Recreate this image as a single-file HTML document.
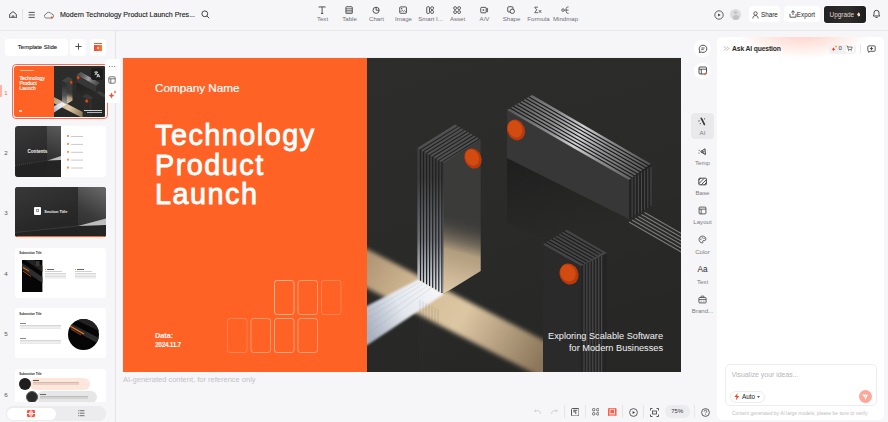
<!DOCTYPE html>
<html><head><meta charset="utf-8">
<style>
*{box-sizing:border-box;margin:0;padding:0}
html,body{width:888px;height:422px;overflow:hidden;background:#f6f6f8;font-family:"Liberation Sans",sans-serif;color:#222}
.a{position:absolute}
.tb{left:0;top:0;width:888px;height:31px;border-bottom:1px solid #e6e6e9;background:#f6f6f8}
.lp{left:0;top:31px;width:116px;height:391px;border-right:1px solid #e6e6e9;background:#f6f6f8}
.card{background:#fff;border-radius:4px}
.tool{width:27px;text-align:center;top:6px}
.tool svg{display:block;margin:0 auto}
.tool svg{width:8.2px;height:8.2px}
.tool span{display:block;font-size:6.1px;line-height:7px;color:#707075;margin-top:1px;white-space:nowrap}
.num{font-size:6.2px;color:#555;width:12px;text-align:center;left:0}
.thumb{left:14.5px;width:91px;height:51px;border-radius:3px;overflow:hidden;background:#fff}
.side span{display:block;font-size:6.1px;line-height:7px;color:#7a7a7e;text-align:center;margin-top:3.6px;white-space:nowrap}
.side svg{width:9px;height:9px}
</style></head><body>

<!-- ============ TOP BAR ============ -->
<div class="a tb"></div>
<!-- home -->
<svg class="a" style="left:8.5px;top:10.8px" width="8" height="7.5" viewBox="0 0 8 7.5"><path d="M0.7 3.3 L4 0.6 L7.3 3.3 V6.9 H0.7 Z" fill="none" stroke="#333" stroke-width="0.9" stroke-linejoin="round"/><path d="M3.1 6.9 V4.9 H4.9 V6.9" fill="none" stroke="#333" stroke-width="0.8"/></svg>
<div class="a" style="left:22px;top:9px;width:1px;height:11px;background:#e2e2e5"></div>
<!-- menu -->
<svg class="a" style="left:28px;top:11px" width="8" height="8" viewBox="0 0 8 8"><path d="M0.6 1.4H6.8M0.6 3.9H6.8M0.6 6.4H6.8" stroke="#444" stroke-width="0.9"/></svg>
<!-- cloud -->
<svg class="a" style="left:44px;top:11px" width="10" height="8" viewBox="0 0 10 8"><path d="M2.5 7 H7.5 A2 2 0 0 0 7.5 3 A3 3 0 0 0 2 3.2 A1.9 1.9 0 0 0 2.5 7Z" fill="none" stroke="#666" stroke-width="0.8"/><circle cx="7.8" cy="6.5" r="1.1" fill="#e85a2a"/></svg>
<div class="a" style="left:60px;top:10.5px;font-size:7.05px;color:#1a1a1a;white-space:nowrap;-webkit-text-stroke:0.12px #1a1a1a">Modern Technology Product Launch Pres...</div>
<!-- search -->
<svg class="a" style="left:201px;top:10px" width="9" height="9" viewBox="0 0 9 9"><circle cx="3.8" cy="3.8" r="2.9" fill="none" stroke="#333" stroke-width="0.9"/><path d="M6 6 L8.2 8.2" stroke="#333" stroke-width="0.9"/></svg>

<!-- toolbar -->
<div class="a tool" style="left:309px"><svg width="9" height="9" viewBox="0 0 9 9"><path d="M1 1.5 V1 H8 V1.5 M4.5 1 V8.2 M3.2 8.2 H5.8" fill="none" stroke="#333" stroke-width="0.9"/></svg><span>Text</span></div>
<div class="a tool" style="left:336px"><svg width="9" height="9" viewBox="0 0 9 9"><rect x="1" y="0.8" width="7" height="7.6" rx="0.8" fill="none" stroke="#333" stroke-width="0.9"/><path d="M1 3H8M1 4.8H8M1 6.6H8" stroke="#333" stroke-width="0.7"/></svg><span>Table</span></div>
<div class="a tool" style="left:363px"><svg width="9" height="9" viewBox="0 0 9 9"><circle cx="4.5" cy="4.7" r="3.4" fill="none" stroke="#333" stroke-width="0.9"/><path d="M4.5 1.3 V4.7 H7.9" fill="none" stroke="#333" stroke-width="0.9"/></svg><span>Chart</span></div>
<div class="a tool" style="left:390px"><svg width="9" height="9" viewBox="0 0 9 9"><rect x="0.8" y="1" width="7.4" height="7" rx="0.8" fill="none" stroke="#333" stroke-width="0.9"/><path d="M1.5 6.8 L3.5 4.6 L5 6 L6 5 L7.8 6.8" fill="none" stroke="#333" stroke-width="0.7"/><circle cx="3" cy="3" r="0.7" fill="#333"/></svg><span>Image</span></div>
<div class="a tool" style="left:417px"><svg width="9" height="9" viewBox="0 0 9 9"><rect x="0.8" y="0.8" width="3" height="7.4" rx="1" fill="none" stroke="#333" stroke-width="0.9"/><rect x="5.2" y="0.8" width="3" height="3.2" rx="1.2" fill="none" stroke="#333" stroke-width="0.9"/><rect x="5.2" y="5" width="3" height="3.2" rx="1.2" fill="none" stroke="#333" stroke-width="0.9"/></svg><span>Smart I...</span></div>
<div class="a tool" style="left:444px"><svg width="9" height="9" viewBox="0 0 9 9"><rect x="0.8" y="0.8" width="3" height="3" rx="1.2" fill="none" stroke="#333" stroke-width="0.9"/><rect x="5.2" y="0.8" width="3" height="3" rx="1.2" fill="none" stroke="#333" stroke-width="0.9"/><rect x="0.8" y="5.2" width="3" height="3" rx="1.2" fill="none" stroke="#333" stroke-width="0.9"/><rect x="5.2" y="5.2" width="3" height="3" rx="1.2" fill="none" stroke="#333" stroke-width="0.9"/></svg><span>Asset</span></div>
<div class="a tool" style="left:471px"><svg width="9" height="9" viewBox="0 0 9 9"><rect x="0.8" y="1.5" width="6" height="6" rx="1" fill="none" stroke="#333" stroke-width="0.9"/><path d="M6.8 3.5 L8.3 2.6 V6.4 L6.8 5.5" fill="none" stroke="#333" stroke-width="0.8"/><path d="M3 3.3 L5 4.5 L3 5.7Z" fill="#333"/></svg><span>A/V</span></div>
<div class="a tool" style="left:498px"><svg width="9" height="9" viewBox="0 0 9 9"><rect x="0.8" y="0.8" width="5.8" height="5.8" rx="1" fill="none" stroke="#333" stroke-width="0.9"/><circle cx="5.8" cy="5.8" r="2.4" fill="#f6f6f8" stroke="#333" stroke-width="0.9"/></svg><span>Shape</span></div>
<div class="a tool" style="left:525px"><svg width="9" height="9" viewBox="0 0 9 9"><path d="M4.3 1.3 H0.8 L3 4.3 L0.8 7.3 H4.3" fill="none" stroke="#333" stroke-width="0.8"/><path d="M5.3 4.5 L8 7.5 M8 4.5 L5.3 7.5" stroke="#333" stroke-width="0.8"/></svg><span>Formula</span></div>
<div class="a tool" style="left:552px"><svg width="9" height="9" viewBox="0 0 9 9"><circle cx="2.2" cy="4.5" r="1.4" fill="none" stroke="#333" stroke-width="0.8"/><path d="M3.6 4.5 H5 M8.3 1 C6 1 5.6 2 5.6 3.4 V5.6 C5.6 7 6 8 8.3 8 M5.6 4.5 H8.3" fill="none" stroke="#333" stroke-width="0.8"/></svg><span>Mindmap</span></div>

<!-- right top -->
<svg class="a" style="left:714px;top:9.5px" width="10" height="10" viewBox="0 0 10 10"><circle cx="5" cy="5" r="4.2" fill="none" stroke="#3a3a3a" stroke-width="0.8"/><path d="M4.1 3.4 L6.6 5 L4.1 6.6Z" fill="#3a3a3a"/></svg>
<div class="a" style="left:730.2px;top:8.8px;width:11px;height:11px;border-radius:50%;background:#dcdcde;overflow:hidden"><div class="a" style="left:4px;top:2.2px;width:3px;height:3px;border-radius:50%;background:#c2c2c5"></div><div class="a" style="left:2.5px;top:6.3px;width:6px;height:5px;border-radius:50%;background:#c2c2c5"></div></div>
<div class="a card" style="left:749px;top:6px;width:31px;height:16px"><svg class="a" style="left:2.5px;top:4.5px" width="8" height="8" viewBox="0 0 8 8"><circle cx="3.5" cy="2.5" r="1.7" fill="none" stroke="#333" stroke-width="0.8"/><path d="M0.8 7.5 C1 5.5 2 4.6 3.5 4.6 C5 4.6 6 5.5 6.2 7.5" fill="none" stroke="#333" stroke-width="0.8"/></svg><span class="a" style="left:12px;top:5px;font-size:6.3px;color:#222">Share</span></div>
<div class="a card" style="left:784px;top:6px;width:36px;height:16px"><svg class="a" style="left:4.5px;top:4.3px" width="8" height="8" viewBox="0 0 8 8"><path d="M4 0.8 V5 M2.3 2.4 L4 0.8 L5.7 2.4 M1 3.8 V7.2 H7 V3.8" fill="none" stroke="#333" stroke-width="0.8"/></svg><span class="a" style="left:12.8px;top:5px;font-size:6.3px;color:#222">Export</span></div>
<div class="a" style="left:824px;top:6px;width:42px;height:16.5px;border-radius:3px;background:linear-gradient(90deg,#222,#2e2e2e 55%,#1e1e1e);box-shadow:0 0 0 1px #fff"><span class="a" style="left:5.6px;top:4.8px;font-size:6.4px;color:#e0d3c6">Upgrade</span><svg class="a" style="left:32.8px;top:6.2px" width="3.5" height="5" viewBox="0 0 4 5"><path d="M2 0 L4 2.5 L2 5 L0 2.5Z" fill="#f3e0c8"/></svg></div>
<svg class="a" style="left:872px;top:9px" width="9" height="10" viewBox="0 0 9 10"><path d="M1.2 7 C2 6 2 5 2 3.8 A2.5 2.5 0 0 1 7 3.8 C7 5 7 6 7.8 7Z" fill="none" stroke="#333" stroke-width="0.9" stroke-linejoin="round"/><path d="M3.5 8.5 H5.5" stroke="#333" stroke-width="0.9"/></svg>

<!-- ============ LEFT PANEL ============ -->
<div class="a lp"></div>
<div class="a card" style="left:5px;top:39px;width:63px;height:16.5px"><span class="a" style="left:12.8px;top:4.8px;font-size:6.0px;color:#1a1a1a;white-space:nowrap;-webkit-text-stroke:0.1px #1a1a1a">Template Slide</span></div>
<div class="a card" style="left:70px;top:39px;width:16px;height:16.5px"><svg class="a" style="left:4.5px;top:4.2px" width="7" height="7" viewBox="0 0 7 7"><path d="M3.5 0.4V6.6M0.4 3.5H6.6" stroke="#333" stroke-width="0.85"/></svg></div>
<div class="a card" style="left:90px;top:39px;width:16px;height:16.5px"><div class="a" style="left:4px;top:4px;width:8px;height:1px;background:#f0552b"></div><div class="a" style="left:4px;top:6px;width:8px;height:6px;background:linear-gradient(90deg,#f0483a,#ff7a2a)"></div><div class="a" style="left:7px;top:8px;width:2px;height:2px;background:#fff;border-radius:50%"></div></div>

<!-- slides list placeholder -->
<!-- thumb 1 -->
<div class="a" style="left:0;top:85px;width:2px;height:12px;background:#ffb3a3;border-radius:0 1px 1px 0"></div>
<div class="a num" style="top:88.5px;color:#f4683f">1</div>
<div class="a" style="left:12px;top:64px;width:95.5px;height:55px;border:1px solid #ff6a55;border-radius:4px;background:#fff"></div>
<div class="a thumb" style="left:14px;top:66px;width:91.5px;height:51px;border-radius:2.5px">
  <div class="a" style="left:0;top:0;width:40px;height:51px;background:#ff6224"></div>
  <svg class="a" style="left:40px;top:0" width="51" height="51" viewBox="0 0 314 314"><use href="#photo" width="314" height="314"/></svg>
  <div class="a" style="left:5.5px;top:4.4px;width:14px;height:0.8px;background:#ffb592"></div>
  <div class="a" style="left:5.5px;top:10.3px;font-size:5px;line-height:4.9px;color:#fff;white-space:nowrap;-webkit-text-stroke:0.15px #fff">Technology<br>Product<br>Launch</div>
  <div class="a" style="left:5px;top:44px;width:3px;height:2px;background:#ffd0b8"></div>
  <div class="a" style="left:69.5px;top:43.6px;width:18px;height:0.8px;background:#cfcfcf"></div>
  <div class="a" style="left:73px;top:45.5px;width:14.5px;height:0.8px;background:#b5b5b5"></div>
  <div class="a" style="left:77px;top:2px;width:12px;height:12px;border-radius:2.5px;background:#1c1c1c"></div>
  <svg class="a" style="left:79px;top:4px" width="8" height="8" viewBox="0 0 9 9" fill="none" stroke="#f0f0f0" stroke-width="0.9"><path d="M1.5 2.5 H5.5 M3.5 1.2 V2.5 M1.8 5.5 C3.5 4.8 4.6 3.6 5 2.5 M2.5 3.3 C3.2 4.5 4.5 5.3 5.5 5.6 M4.3 8.3 L6 4.5 L7.7 8.3 M4.9 7 H7.1"/></svg>
</div>
<!-- thumb toolbar -->
<div class="a card" style="left:105px;top:59px;width:15px;height:44px;border-radius:4px 0 0 4px"></div>
<div class="a" style="left:108.5px;top:66px;width:1.4px;height:1.4px;background:#777;box-shadow:2.6px 0 0 #777,5.2px 0 0 #777"></div>
<svg class="a" style="left:108px;top:76px" width="8" height="8" viewBox="0 0 8 8"><rect x="0.8" y="0.8" width="6.4" height="6.4" rx="1" fill="none" stroke="#555" stroke-width="0.8"/><path d="M0.8 2.8 H7.2 M2.8 2.8 V7.2" stroke="#555" stroke-width="0.8"/></svg>
<svg class="a" style="left:107.5px;top:90px" width="9" height="9" viewBox="0 0 9 9"><path d="M3.5 2.5 Q3.9 5.1 6.5 5.5 Q3.9 5.9 3.5 8.5 Q3.1 5.9 0.5 5.5 Q3.1 5.1 3.5 2.5Z" fill="#ff4b2b"/><path d="M7 0.5 Q7.2 1.8 8.5 2 Q7.2 2.2 7 3.5 Q6.8 2.2 5.5 2 Q6.8 1.8 7 0.5Z" fill="#ff4b2b"/></svg>

<!-- thumb 2 -->
<div class="a num" style="top:149px">2</div>
<div class="a thumb" style="top:126.4px;height:50.6px;border-radius:3px">
  <div class="a" style="left:0;top:0;width:46px;height:51px;background:linear-gradient(160deg,#3a3a3a,#262626 70%)"></div>
  <div class="a" style="left:32.5px;top:0;width:13.5px;height:51px;background:linear-gradient(200deg,#5a5a5a,#333 60%,#2a2a2a)"></div>
  <svg class="a" style="left:0;top:0" width="46" height="51" viewBox="0 0 46 51"><path d="M0 40 L32.5 34.5 L46 31.5 V51 H0Z" fill="#222" opacity="0.8"/><path d="M32.5 34.5 L46 30 V34 Z" fill="#bdbdbd"/><path d="M0 39.5 L32.5 34.5" stroke="#777" stroke-width="0.4" stroke-dasharray="1 1"/></svg>
  <div class="a" style="left:13px;top:22.3px;font-size:4.6px;font-weight:bold;color:#f4f4f4;white-space:nowrap">Contents</div>
  <div class="a" style="left:52.8px;top:9px;width:1.5px;height:1.5px;background:#ff9466;box-shadow:0 7.9px 0 #ff9466,0 15.8px 0 #ff9466,0 23.6px 0 #ff9466,0 31.5px 0 #ff9466"></div>
  <div class="a" style="left:56px;top:9.2px;width:12.5px;height:1px;background:#cacaca;box-shadow:0 7.9px 0 #cacaca,0 15.8px 0 #cacaca,0 23.6px 0 #cacaca,0 31.5px 0 #cacaca"></div>
</div>

<!-- thumb 3 -->
<div class="a num" style="top:209.3px">3</div>
<div class="a thumb" style="top:186.8px;height:50.4px;border-radius:3px;background:#2a2a2a">
  <div class="a" style="left:0;top:0;width:63px;height:51px;background:linear-gradient(160deg,#383838,#262626 70%)"></div>
  <div class="a" style="left:63px;top:0;width:28px;height:51px;background:linear-gradient(210deg,#6a6a6a,#3a3a3a 55%,#2b2b2b)"></div>
  <svg class="a" style="left:0;top:0" width="91" height="51" viewBox="0 0 91 51"><path d="M0 45.5 L63 39 L91 38 V51 H0Z" fill="#232323" opacity="0.9"/><path d="M63 39 L91 31.5 V38 Z" fill="#bdbdbd"/><path d="M0 45.5 L63 39" stroke="#5a5a5a" stroke-width="0.4"/></svg>
  <div class="a" style="left:19px;top:20.4px;width:7.8px;height:7.6px;background:#fff;border-radius:1px"></div>
  <div class="a" style="left:21.6px;top:22.6px;width:2.5px;height:3px;border:0.5px solid #999"></div>
  <div class="a" style="left:29.8px;top:21.8px;font-size:3.9px;font-weight:bold;color:#f2f2f2;white-space:nowrap">Section Title</div>
  <div class="a" style="left:0;top:49.4px;width:91px;height:1px;background:#ff6224"></div>
</div>

<!-- thumb 4 -->
<div class="a num" style="top:269.5px">4</div>
<div class="a thumb" style="top:247.7px;height:50px;border-radius:3px">
  <div class="a" style="left:4.8px;top:3.8px;font-size:2.9px;font-weight:bold;color:#222;white-space:nowrap">Subsection Title</div>
  <svg class="a" style="left:7.7px;top:12.2px" width="20.4" height="32.5" viewBox="0 0 20.4 32.5"><rect width="20.4" height="32.5" fill="#060606"/><path d="M0 3 L20.4 17 V23 L0 9Z" fill="#2e2e2e"/><path d="M3 0 H12 L20.4 6 V12 Z" fill="#222"/><path d="M1 7.5 L7 11" stroke="#ff7a1a" stroke-width="1"/><path d="M1 11 L9 16.5" stroke="#d86010" stroke-width="0.8"/><rect x="14" y="1" width="3.5" height="5" fill="#3a3a3a"/></svg>
  <div class="a" style="left:30.7px;top:21.8px;width:1px;height:1px;background:#ff8a55"></div>
  <div class="a" style="left:32px;top:21.8px;width:7px;height:0.9px;background:#666"></div>
  <div class="a" style="left:30.7px;top:23.8px;width:17px;height:0.6px;background:#cfcfcf"></div>
  <div class="a" style="left:30.7px;top:25.8px;width:21px;height:0.6px;background:#d8d8d8;box-shadow:0 1.5px 0 #dadada,0 3px 0 #dcdcdc,0 4.5px 0 #e2e2e2"></div>
  <div class="a" style="left:60.9px;top:21.8px;width:1px;height:1px;background:#ff8a55"></div>
  <div class="a" style="left:62.2px;top:21.8px;width:7px;height:0.9px;background:#666"></div>
  <div class="a" style="left:60.9px;top:23.8px;width:17px;height:0.6px;background:#cfcfcf"></div>
  <div class="a" style="left:60.9px;top:25.8px;width:21px;height:0.6px;background:#d8d8d8;box-shadow:0 1.5px 0 #dadada,0 3px 0 #dcdcdc,0 4.5px 0 #e2e2e2"></div>
</div>

<!-- thumb 5 -->
<div class="a num" style="top:330.2px">5</div>
<div class="a thumb" style="top:307.7px;height:50px;border-radius:3px">
  <div class="a" style="left:4.8px;top:4.2px;font-size:2.9px;font-weight:bold;color:#222;white-space:nowrap">Subsection Title</div>
  <div class="a" style="left:5.5px;top:15px;width:6px;height:0.9px;background:#888"></div>
  <div class="a" style="left:5.5px;top:17px;width:41px;height:0.7px;background:#d6d6d6;box-shadow:0 1.4px 0 #dcdcdc,0 2.8px 0 #e4e4e4"></div>
  <div class="a" style="left:5.5px;top:30px;width:6px;height:0.9px;background:#888"></div>
  <div class="a" style="left:5.5px;top:32px;width:41px;height:0.7px;background:#d6d6d6;box-shadow:0 1.4px 0 #dcdcdc,0 2.8px 0 #e4e4e4"></div>
  <svg class="a" style="left:53px;top:11.3px" width="31" height="31" viewBox="0 0 31 31"><defs><clipPath id="cc5"><circle cx="15.5" cy="15.5" r="15.5"/></clipPath></defs><g clip-path="url(#cc5)"><rect width="31" height="31" fill="#060606"/><path d="M0 3 L31 19 V25 L0 8Z" fill="#2c2c2c"/><path d="M6 0 H31 V12Z" fill="#222"/><path d="M2 7 L16 15" stroke="#ff7a1a" stroke-width="1.1"/><path d="M3 10 L13 16" stroke="#c85a10" stroke-width="0.7"/></g></svg>
</div>

<!-- thumb 6 -->
<div class="a num" style="top:391.3px">6</div>
<div class="a thumb" style="top:368.8px;height:50px;border-radius:3px">
  <div class="a" style="left:4.8px;top:3.4px;font-size:2.9px;font-weight:bold;color:#222;white-space:nowrap">Subsection Title</div>
  <div class="a" style="left:15px;top:9.2px;width:60px;height:11.7px;border-radius:6px;background:#fde6dc"></div>
  <div class="a" style="left:4px;top:8.9px;width:12px;height:12px;border-radius:50%;background:#1e1e1e"></div>
  <div class="a" style="left:18px;top:11.5px;width:6px;height:0.8px;background:#555"></div>
  <div class="a" style="left:18px;top:13.5px;width:46px;height:0.8px;background:#d7b9aa;box-shadow:0 1.5px 0 #d7b9aa"></div>
  <div class="a" style="left:22px;top:22.7px;width:60px;height:11.7px;border-radius:6px;background:#e6e6e6"></div>
  <div class="a" style="left:11px;top:22.7px;width:12px;height:12px;border-radius:50%;background:#2a2a2a;border:1.4px solid #555"></div>
  <div class="a" style="left:25px;top:25px;width:6px;height:0.8px;background:#666"></div>
  <div class="a" style="left:25px;top:27px;width:48px;height:0.8px;background:#bdbdbd;box-shadow:0 1.5px 0 #bdbdbd"></div>
</div>
<!-- bottom tab bar -->
<div class="a" style="left:0;top:402px;width:115px;height:20px;background:#f6f6f8"></div>
<div class="a" style="left:6px;top:406px;width:100px;height:14.5px;border-radius:7px;background:#ececef"></div>
<div class="a" style="left:7px;top:407.6px;width:48.5px;height:12px;border-radius:6px;background:#fff"></div>
<svg class="a" style="left:27px;top:410px" width="8" height="7" viewBox="0 0 8 7"><rect width="8" height="7" rx="1.2" fill="#ff4f3b"/><path d="M0 3.5 H8 M4 0 V7" stroke="#fff" stroke-width="0.9"/><rect x="2.3" y="2" width="3.4" height="3" fill="none" stroke="#fff" stroke-width="0.7"/></svg>
<svg class="a" style="left:78px;top:410.3px" width="6.5" height="6.5" viewBox="0 0 6.5 6.5"><path d="M0 0.7 H0.8 M1.6 0.7 H6.5 M0 3.2 H0.8 M1.6 3.2 H6.5 M0 5.7 H0.8 M1.6 5.7 H6.5" stroke="#444" stroke-width="0.75"/></svg>

<!-- ============ MAIN SLIDE ============ -->
<div class="a" style="left:122px;top:57px;width:560px;height:315px;border-left:1px solid #e3eef8;border-top:1px solid #e8f0f8"></div>
<div class="a" style="left:123px;top:58px;width:244px;height:314px;background:#ff6224"></div>
<svg class="a" style="left:367px;top:58px" width="314" height="314" viewBox="0 0 314 314">
<defs>
<symbol id="photo" viewBox="0 0 314 314">
  <defs>
    <linearGradient id="bgG" x1="0" y1="0" x2="0.3" y2="1"><stop offset="0" stop-color="#2d2e2c"/><stop offset="0.6" stop-color="#2a2b29"/><stop offset="1" stop-color="#272826"/></linearGradient>
    <filter id="bl2" x="-30%" y="-30%" width="160%" height="160%"><feGaussianBlur stdDeviation="2"/></filter>
    <filter id="bl1" x="-30%" y="-30%" width="160%" height="160%"><feGaussianBlur stdDeviation="0.8"/></filter>
    <filter id="bl8" x="-100%" y="-100%" width="300%" height="300%"><feGaussianBlur stdDeviation="8"/></filter>
    <linearGradient id="warmG" gradientUnits="userSpaceOnUse" x1="0" y1="200" x2="178" y2="300"><stop offset="0" stop-color="#b09575"/><stop offset="0.3" stop-color="#d5bd98"/><stop offset="0.55" stop-color="#dcc6a3"/><stop offset="1" stop-color="#8a755a"/></linearGradient>
    <linearGradient id="coolG" gradientUnits="userSpaceOnUse" x1="0" y1="270" x2="70" y2="232"><stop offset="0" stop-color="#a9b1c0"/><stop offset="0.5" stop-color="#e3e7ee"/><stop offset="1" stop-color="#f5f6f9"/></linearGradient>
    <linearGradient id="faceW" gradientUnits="userSpaceOnUse" x1="80" y1="236" x2="100" y2="160"><stop offset="0" stop-color="#e0cba8"/><stop offset="0.55" stop-color="#b09c7e"/><stop offset="1" stop-color="#3b3b3a" stop-opacity="0"/></linearGradient>
    <linearGradient id="ribL" gradientUnits="userSpaceOnUse" x1="0" y1="120" x2="0" y2="232"><stop offset="0" stop-color="#3c3c3c"/><stop offset="0.55" stop-color="#6e7178"/><stop offset="1" stop-color="#dfe3ea"/></linearGradient>
    <linearGradient id="shG" gradientUnits="userSpaceOnUse" x1="0" y1="120" x2="20" y2="215"><stop offset="0" stop-color="#1a1a1a" stop-opacity="0.85"/><stop offset="1" stop-color="#1a1a1a" stop-opacity="0"/></linearGradient>
    <linearGradient id="top2" gradientUnits="userSpaceOnUse" x1="145" y1="45" x2="280" y2="110"><stop offset="0" stop-color="#585858"/><stop offset="0.3" stop-color="#8a8a8c"/><stop offset="0.5" stop-color="#d2d2d4"/><stop offset="0.7" stop-color="#8c8c8e"/><stop offset="1" stop-color="#555"/></linearGradient>
  </defs>
  <rect width="314" height="314" fill="url(#bgG)"/>
  <!-- ground shadow in front of block2 -->
  <polygon points="140,100 262,161 300,182 300,235 140,165" fill="url(#shG)"/>

  <polygon points="-4,189 180,284 180,322 -4,228" fill="url(#warmG)" filter="url(#bl2)"/>
  <polygon points="-4,250 52,221 77,236 -4,290" fill="url(#coolG)" filter="url(#bl1)"/>
  <path stroke="#9aa0aa" stroke-width="0.8" opacity="0.25" d="M-2,262 L56,226 M-2,256 L53,224 M-2,270 L60,228 M-2,278 L64,230"/>
  <path stroke="#4a4a4a" stroke-width="0.8" opacity="0.2" d="M53,242.0 V314 M56,243.5 V314 M59,245.0 V314 M62,246.5 V314 M65,248.0 V314 M68,249.5 V314 M71,251.0 V314"/>
  <polygon points="140,52 262,122 262,161 140,100" fill="#373737"/>
  <polygon points="140,52 165,37 284,106 262,122" fill="url(#top2)"/>
  <path stroke="#1a1a1a" stroke-width="1.2" d="M143.1,50.1 L265.1,120.1 M146.2,48.2 L268.2,118.2 M149.4,46.4 L271.4,116.4 M152.5,44.5 L274.5,114.5 M155.6,42.6 L277.6,112.6 M158.8,40.8 L280.8,110.8 M161.9,38.9 L283.9,108.9"/>
  <polygon points="262,122 284,106 284,148 262,161" fill="#232323"/>
  <path stroke="#555" stroke-width="0.8" d="M265.1,120.1 V159.1 M268.2,118.2 V157.2 M271.4,116.4 V155.4 M274.5,114.5 V153.5 M277.6,112.6 V151.6 M280.8,110.8 V149.8 M283.9,108.9 V147.9"/>
  <path stroke="#858585" stroke-width="1.1" opacity="0.9" d="M262.0,164.0 L330.0,203.0 M265.1,162.1 L333.1,201.1 M268.2,160.2 L336.2,199.2 M271.4,158.4 L339.4,197.4 M274.5,156.5 L342.5,195.5 M277.6,154.6 L345.6,193.6"/>
  <ellipse cx="149" cy="72" rx="8.7" ry="10.6" fill="#b83a0c" transform="rotate(-22 149 72)"/>
  <ellipse cx="148" cy="71" rx="7" ry="8.8" fill="#d24c12" transform="rotate(-22 148 71)"/>
  <polygon points="76.4,105 113.7,82 113.7,213 76.4,236" fill="#3b3b3a"/>
  <polygon points="76.4,160 113.7,140 113.7,213 76.4,236" fill="url(#faceW)"/>
  <polygon points="50.4,90 76.4,105 76.4,236 50.4,221" fill="url(#ribL)"/>
  <path stroke="#1f1f1f" stroke-width="1.2" d="M53.5,91.8 V222.8 M56.5,93.5 V224.5 M59.6,95.3 V226.3 M62.6,97.1 V228.1 M65.7,98.8 V229.8 M68.8,100.6 V231.6 M71.8,102.4 V233.4 M74.9,104.1 V235.1"/>
  <polygon points="50.4,90 88,66.6 113.7,81.5 76.4,105" fill="#505050"/>
  <path stroke="#202020" stroke-width="1.1" d="M53.5,91.8 L91.1,68.4 M56.5,93.5 L94.1,70.1 M59.6,95.3 L97.2,71.9 M62.6,97.1 L100.2,73.7 M65.7,98.8 L103.3,75.4 M68.8,100.6 L106.4,77.2 M71.8,102.4 L109.4,79.0 M74.9,104.1 L112.5,80.7"/>
  <ellipse cx="106" cy="100.5" rx="8.3" ry="10.4" fill="#b83a0c" transform="rotate(-25 106 100.5)"/>
  <ellipse cx="105" cy="99.5" rx="6.6" ry="8.4" fill="#d24c12" transform="rotate(-25 105 99.5)"/>
  <polygon points="176,186.6 214,208 214,320 176,320" fill="#2a2a2a"/>
  <polygon points="214,208 240,195 240,320 214,320" fill="#242424"/>
  <path stroke="#565656" stroke-width="0.9" d="M217.0,206.1 V320 M219.9,204.3 V320 M222.9,202.4 V320 M225.8,200.6 V320 M228.8,198.7 V320 M231.8,196.8 V320 M234.7,195.0 V320"/>
  <polygon points="176,186.6 199.7,171.7 240,195 214,208" fill="#454545"/>
  <path stroke="#1c1c1c" stroke-width="1.1" d="M179.0,184.7 L217.0,206.1 M181.9,182.9 L219.9,204.3 M184.9,181.0 L222.9,202.4 M187.8,179.2 L225.8,200.6 M190.8,177.3 L228.8,198.7 M193.8,175.4 L231.8,196.8 M196.7,173.6 L234.7,195.0"/>
  <ellipse cx="202" cy="216" rx="9.3" ry="10.8" fill="#b83a0c" transform="rotate(-25 202 216)"/>
  <ellipse cx="201" cy="215" rx="7.4" ry="8.8" fill="#d24c12" transform="rotate(-25 201 215)"/>
</symbol>
</defs>
<use href="#photo" x="0" y="0" width="314" height="314"/>
<text x="296" y="280.5" text-anchor="end" font-family="Liberation Sans" font-size="9.2" fill="#f2f2f2">Exploring Scalable Software</text>
<text x="296" y="292.7" text-anchor="end" font-family="Liberation Sans" font-size="9.2" fill="#f2f2f2">for Modern Businesses</text>
</svg>
<!-- slide left text -->
<div class="a" style="left:155px;top:81px;font-size:11.7px;color:#fff;white-space:nowrap;-webkit-text-stroke:0.2px #fff">Company Name</div>
<div class="a" style="left:155px;top:121px;font-size:28.8px;line-height:29.6px;color:#fff;white-space:nowrap;letter-spacing:1.5px;-webkit-text-stroke:0.9px #fff">Technology<br>Product<br>Launch</div>
<div class="a" style="left:155px;top:331px;font-size:7.3px;line-height:9.4px;font-weight:bold;color:#fff;white-space:nowrap">Data:<br><span style="font-size:6.6px;letter-spacing:-0.35px">2024.11.7</span></div>
<svg class="a" style="left:223px;top:276px" width="122" height="80" viewBox="0 0 122 80" fill="none" stroke="#ffd9c4" stroke-width="0.9">
  <rect x="51.5" y="4.5" width="19.5" height="34" rx="2.5" opacity="0.7"/>
  <rect x="75" y="4.5" width="19.5" height="34" rx="2.5" opacity="0.55"/>
  <rect x="98.5" y="4.5" width="19.5" height="34" rx="2.5" opacity="0.3"/>
  <rect x="4.5" y="42.5" width="19.5" height="34" rx="2.5" opacity="0.3"/>
  <rect x="28" y="42.5" width="19.5" height="34" rx="2.5" opacity="0.5"/>
  <rect x="51.5" y="42.5" width="19.5" height="34" rx="2.5" opacity="0.6"/>
  <rect x="75" y="42.5" width="19.5" height="34" rx="2.5" opacity="0.55"/>
</svg>

<div class="a" style="left:123px;top:375px;font-size:7.5px;color:#c2c2c6;white-space:nowrap">AI-generated content, for reference only</div>

<!-- ============ RIGHT ============ -->
<!-- right icon column -->
<div class="a" style="left:694px;top:40px;width:16.5px;height:16.5px;border-radius:50%;background:#fff"></div>
<svg class="a" style="left:697.5px;top:43.5px" width="10" height="10" viewBox="0 0 10 10"><path d="M5 1.2 C7.3 1.2 8.8 2.7 8.8 4.8 C8.8 6.9 7.3 8.4 5 8.4 C4.3 8.4 3.7 8.3 3.2 8 L1.3 8.7 L1.8 7 C1.4 6.4 1.2 5.6 1.2 4.8 C1.2 2.7 2.7 1.2 5 1.2Z" fill="none" stroke="#333" stroke-width="0.85"/><path d="M3.3 4 H6.7 M3.3 5.6 H5.6" stroke="#333" stroke-width="0.8"/></svg>
<div class="a" style="left:694px;top:62.5px;width:16.5px;height:16.5px;border-radius:50%;background:#fff"></div>
<svg class="a" style="left:697.5px;top:66px" width="10" height="10" viewBox="0 0 10 10"><rect x="1" y="1" width="7.5" height="7" rx="1" fill="none" stroke="#333" stroke-width="0.85"/><path d="M1 3.2 H8.5 M3.3 3.2 V8" stroke="#333" stroke-width="0.8"/><path d="M6.2 8.8 L8.8 6.2" stroke="#ff5533" stroke-width="1.2"/></svg>

<div class="a" style="left:691px;top:113px;width:23px;height:26px;border-radius:4px;background:#e9e9ec"></div>
<div class="a side" style="left:688px;top:116.5px;width:29px"><svg style="display:block;margin:0 auto" width="9" height="9" viewBox="0 0 9 9"><path d="M3.3 1.3 L6.4 7.4" stroke="#3a3a3a" stroke-width="1.7" stroke-linecap="round" stroke-dasharray="1.1 0.5"/><circle cx="1" cy="3.9" r="0.65" fill="#444"/><circle cx="2.3" cy="6.6" r="0.6" fill="#444"/><circle cx="6.6" cy="1.8" r="0.6" fill="#444"/></svg><span>AI</span></div>
<div class="a side" style="left:688px;top:146.5px;width:29px"><svg style="display:block;margin:0 auto" width="9" height="9" viewBox="0 0 9 9"><path d="M2.6 4.6 L7 1.8 L7.4 7.6 Z" fill="none" stroke="#3a3a3a" stroke-width="0.95" stroke-linejoin="round"/><path d="M4.2 3.6 L5.6 6.4 M3.5 5.6 L6.5 4.2" stroke="#3a3a3a" stroke-width="0.7"/><circle cx="1.2" cy="3.2" r="0.55" fill="#444"/><circle cx="1" cy="6" r="0.55" fill="#444"/></svg><span>Temp</span></div>
<div class="a side" style="left:688px;top:176.5px;width:29px"><svg style="display:block;margin:0 auto" width="9" height="9" viewBox="0 0 9 9"><defs><clipPath id="bcp"><rect x="0.8" y="1.2" width="7.6" height="6.6" rx="0.8"/></clipPath></defs><rect x="0.8" y="1.2" width="7.6" height="6.6" rx="0.8" fill="none" stroke="#3a3a3a" stroke-width="0.9"/><g clip-path="url(#bcp)" stroke="#3a3a3a" stroke-width="0.9"><path d="M-1 5 L4 0 M0 7.5 L6 1.5 M2.5 8.5 L8.5 2.5 M5 9 L10 4"/></g></svg><span>Base</span></div>
<div class="a side" style="left:688px;top:205.7px;width:29px"><svg style="display:block;margin:0 auto" width="10" height="10" viewBox="0 0 10 10"><rect x="1.2" y="1.2" width="7.6" height="7.6" rx="1" fill="none" stroke="#333" stroke-width="0.85"/><path d="M1.2 3.5 H8.8 M3.5 3.5 V8.8" stroke="#333" stroke-width="0.8"/></svg><span>Layout</span></div>
<div class="a side" style="left:688px;top:235.3px;width:29px"><svg style="display:block;margin:0 auto" width="10" height="10" viewBox="0 0 10 10"><path d="M5 1.2 C2.8 1.2 1.2 2.9 1.2 5 C1.2 7.1 2.8 8.8 4.8 8.8 C5.6 8.8 5.7 8 5.3 7.5 C4.9 7 5.2 6.2 6 6.2 H7.2 C8.2 6.2 8.8 5.5 8.8 4.6 C8.8 2.7 7.1 1.2 5 1.2Z" fill="none" stroke="#333" stroke-width="0.85"/><circle cx="3.2" cy="4.6" r="0.6" fill="#333"/><circle cx="4.8" cy="3" r="0.6" fill="#333"/><circle cx="6.7" cy="3.8" r="0.6" fill="#333"/></svg><span>Color</span></div>
<div class="a side" style="left:688px;top:265px;width:29px"><div style="height:9px;text-align:center;font-size:8.2px;line-height:9px;color:#2a2a2a">Aa</div><span>Text</span></div>
<div class="a side" style="left:688px;top:294.5px;width:29px"><svg style="display:block;margin:0 auto" width="10" height="10" viewBox="0 0 10 10"><rect x="1" y="2.8" width="8" height="6" rx="0.8" fill="none" stroke="#333" stroke-width="0.85"/><path d="M3.5 2.8 V1.2 H6.5 V2.8 M1 5 H9 M3 6.8 H4 M6 6.8 H7" fill="none" stroke="#333" stroke-width="0.75"/></svg><span>Brand...</span></div>

<!-- AI panel -->
<div class="a card" style="left:717px;top:37px;width:167px;height:383px;border-radius:5px;overflow:hidden">
  <div class="a" style="left:18px;top:-32px;width:136px;height:54px;border-radius:50%;background:radial-gradient(ellipse at center,rgba(252,195,185,0.8),rgba(253,222,212,0.5) 45%,rgba(255,255,255,0) 70%)"></div>
</div>
<svg class="a" style="left:723px;top:45px" width="7" height="7" viewBox="0 0 7 7"><path d="M1 1.5 L3 3.5 L1 5.5 M3.8 1.5 L5.8 3.5 L3.8 5.5" fill="none" stroke="#999" stroke-width="0.75"/></svg>
<div class="a" style="left:732px;top:45px;font-size:6.8px;font-weight:bold;color:#2a2a2a;letter-spacing:-0.15px;white-space:nowrap">Ask AI question</div>
<div class="a" style="left:829px;top:44.5px;width:26.5px;height:9px;border-radius:3px;background:#f1f1f3"></div>
<svg class="a" style="left:830.8px;top:45.3px" width="7" height="7" viewBox="0 0 7 7"><path d="M2.5 2.3 Q2.8 3.9 4.4 4.3 Q2.8 4.7 2.5 6.3 Q2.2 4.7 0.6 4.3 Q2.2 3.9 2.5 2.3Z" fill="#ff3b2a"/><path d="M5 0.3 Q5.2 1.3 6.2 1.6 Q5.2 1.9 5 2.9 Q4.8 1.9 3.8 1.6 Q4.8 1.3 5 0.3Z" fill="#ff8a1a"/></svg>
<div class="a" style="left:838.5px;top:44.5px;font-size:6px;color:#333">0</div>
<div class="a" style="left:845.5px;top:45.2px;width:8.5px;height:7.6px;border-radius:2px;background:#fff"></div>
<svg class="a" style="left:846px;top:45px" width="7" height="7" viewBox="0 0 7 7"><path d="M0.5 1 H1.5 L2.3 4.5 H5.5 L6.2 2 H2" fill="none" stroke="#444" stroke-width="0.7"/><circle cx="2.6" cy="5.8" r="0.5" fill="#444"/><circle cx="5.2" cy="5.8" r="0.5" fill="#444"/></svg>
<div class="a" style="left:860px;top:44px;width:1px;height:9px;background:#e8e8ea"></div>
<svg class="a" style="left:866.5px;top:44.5px" width="9" height="8" viewBox="0 0 9 8"><path d="M1.6 0.9 H7.4 Q8.2 0.9 8.2 1.7 V5.5 Q8.2 6.3 7.4 6.3 H3 L1.6 7.4 L1.8 6.3 Q0.8 6.3 0.8 5.5 V1.7 Q0.8 0.9 1.6 0.9Z" fill="none" stroke="#333" stroke-width="0.8" stroke-linejoin="round"/><path d="M4.5 2 V5.2 M2.9 3.6 H6.1" stroke="#333" stroke-width="0.85"/></svg>

<!-- input box -->
<div class="a" style="left:724.5px;top:363.5px;width:152px;height:42.5px;border:1px solid #ececee;border-radius:5px;background:#fff"></div>
<div class="a" style="left:731.5px;top:371px;font-size:6.9px;color:#b5b5b9;white-space:nowrap">Visualize your ideas...</div>
<div class="a" style="left:729.5px;top:391.3px;width:35.5px;height:11.3px;border:1px solid #ececee;border-radius:6px;background:#fff"></div>
<svg class="a" style="left:733.8px;top:393.2px" width="5.5" height="7.5" viewBox="0 0 5.5 7.5"><path d="M3.6 0 L0.4 4.1 H2.5 L1.7 7.5 L5.1 3.1 H3Z" fill="#f4452b"/></svg>
<div class="a" style="left:742px;top:393.2px;font-size:6.4px;color:#222">Auto</div>
<svg class="a" style="left:757px;top:396.3px" width="3" height="2" viewBox="0 0 3 2"><path d="M0 0 H3 L1.5 2Z" fill="#555"/></svg>
<div class="a" style="left:858.5px;top:390.2px;width:13px;height:13px;border-radius:50%;background:#fda69a"></div>
<svg class="a" style="left:861px;top:392.8px" width="8" height="8" viewBox="0 0 8 8"><path d="M1 1.5 L7 1.8 L4.2 6.8 L3.6 4.2Z" fill="#fff"/><path d="M3.6 4.2 L5.2 2.8" stroke="#fda69a" stroke-width="0.6"/></svg>
<div class="a" style="left:732px;top:410.5px;font-size:4.9px;color:#bdbdc1;white-space:nowrap">Content generated by AI large models, please be sure to verify</div>

<!-- canvas bottom bar -->
<svg class="a" style="left:534px;top:408px" width="7" height="7" viewBox="0 0 7 7"><path d="M2 1.5 L0.7 2.8 L2 4.1 M0.7 2.8 H4 C5.5 2.8 6.3 3.8 6.3 5.2 V6" fill="none" stroke="#c8c8cc" stroke-width="0.8"/></svg>
<svg class="a" style="left:550.5px;top:408px" width="7" height="7" viewBox="0 0 7 7"><path d="M5 1.5 L6.3 2.8 L5 4.1 M6.3 2.8 H3 C1.5 2.8 0.7 3.8 0.7 5.2 V6" fill="none" stroke="#c8c8cc" stroke-width="0.8"/></svg>
<div class="a" style="left:564px;top:405px;width:1px;height:13px;background:#e6e6e9"></div>
<svg class="a" style="left:570.5px;top:407.7px" width="8.5" height="8.5" viewBox="0 0 8.5 8.5"><rect x="0.5" y="0.5" width="7.5" height="7.5" rx="1" fill="none" stroke="#444" stroke-width="0.9"/><path d="M2.2 2.3 H6.2 M2.2 3.8 H4.8 V6" fill="none" stroke="#444" stroke-width="0.9"/></svg>
<div class="a" style="left:585px;top:405px;width:1px;height:13px;background:#e6e6e9"></div>
<svg class="a" style="left:591.8px;top:408px" width="7.5" height="7.5" viewBox="0 0 7.5 7.5"><g fill="none" stroke="#444" stroke-width="0.75"><rect x="0.5" y="0.5" width="2.4" height="2.4" rx="0.9"/><rect x="4.6" y="0.5" width="2.4" height="2.4" rx="0.9"/><rect x="0.5" y="4.6" width="2.4" height="2.4" rx="0.9"/><rect x="4.6" y="4.6" width="2.4" height="2.4" rx="0.9"/></g></svg>
<svg class="a" style="left:608px;top:407.7px" width="8.5" height="8.5" viewBox="0 0 8.5 8.5"><rect x="0" y="0" width="8.5" height="8.5" rx="1.3" fill="#ff5a4a"/><rect x="2" y="1.2" width="4.5" height="4.5" fill="none" stroke="#fff" stroke-width="0.8"/><path d="M1 7 H7.5" stroke="#fff" stroke-width="0.7"/></svg>
<div class="a" style="left:621.8px;top:405px;width:1px;height:13px;background:#e6e6e9"></div>
<svg class="a" style="left:629px;top:407.5px" width="9" height="9" viewBox="0 0 9 9"><circle cx="4.5" cy="4.5" r="3.9" fill="none" stroke="#444" stroke-width="0.85"/><path d="M3.6 2.9 L6.1 4.5 L3.6 6.1Z" fill="#444"/></svg>
<div class="a" style="left:642.6px;top:405px;width:1px;height:13px;background:#e6e6e9"></div>
<svg class="a" style="left:650px;top:407.5px" width="9" height="9" viewBox="0 0 9 9"><path d="M0.5 2.5 V0.5 H2.5 M6.5 0.5 H8.5 V2.5 M8.5 6.5 V8.5 H6.5 M2.5 8.5 H0.5 V6.5" fill="none" stroke="#444" stroke-width="0.9"/><rect x="2.5" y="3" width="4" height="3" fill="none" stroke="#444" stroke-width="0.85"/></svg>
<div class="a" style="left:664.5px;top:405px;width:25.5px;height:12.5px;border-radius:6px;background:#ececef"></div>
<div class="a" style="left:664.5px;top:408px;width:25.5px;text-align:center;font-size:5.9px;color:#333">75%</div>
<div class="a" style="left:693.6px;top:405px;width:1px;height:13px;background:#e6e6e9"></div>
<svg class="a" style="left:700.5px;top:407.5px" width="9" height="9" viewBox="0 0 9 9"><circle cx="4.5" cy="4.5" r="3.9" fill="none" stroke="#444" stroke-width="0.85"/><path d="M3.2 3.5 C3.2 2.6 3.8 2.2 4.5 2.2 C5.2 2.2 5.8 2.7 5.8 3.4 C5.8 4.3 4.6 4.4 4.6 5.3" fill="none" stroke="#444" stroke-width="0.8"/><circle cx="4.6" cy="6.5" r="0.45" fill="#444"/></svg>

</body></html>
